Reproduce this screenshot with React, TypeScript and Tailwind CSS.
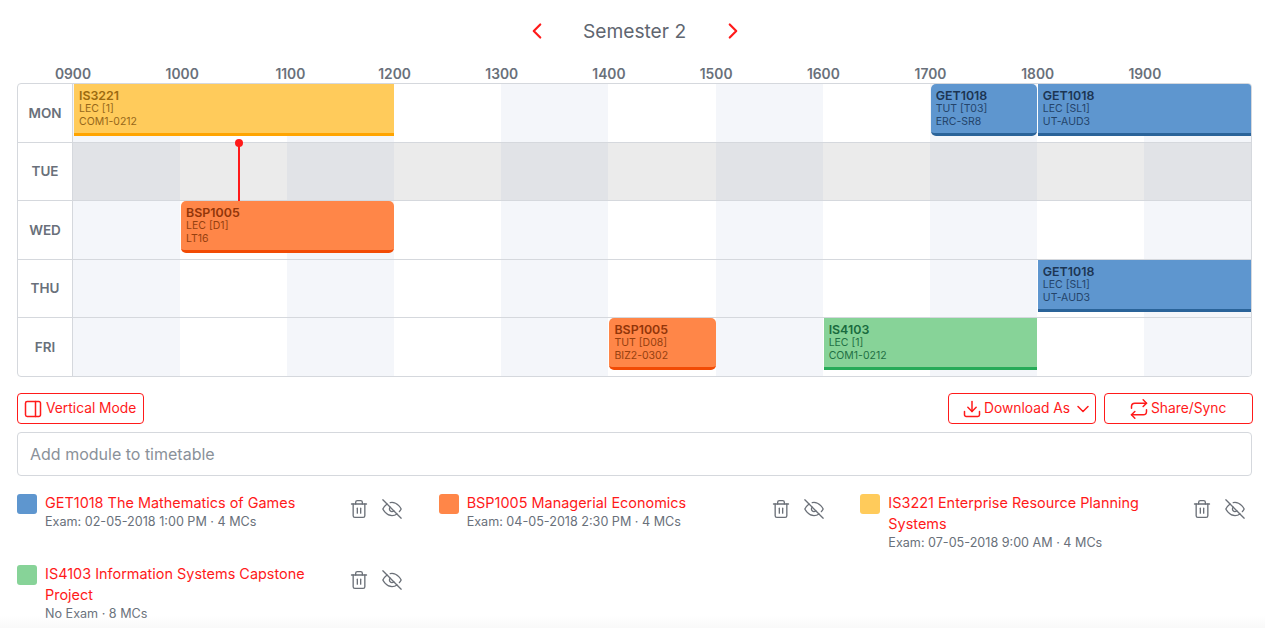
import type { ReactNode } from 'react'

type Colour = 'yellow' | 'orange' | 'blue' | 'green'

interface Lesson {
  code: string
  kind: string
  venue: string
  colour: Colour
  column: string
  rounded?: boolean
}

interface Day {
  name: string
  lessons: Lesson[]
  muted?: boolean
}

const HOURS = ['0900', '1000', '1100', '1200', '1300', '1400', '1500', '1600', '1700', '1800', '1900', '']

const COLOUR_CLASSES: Record<Colour, { box: string; title: string; body: string }> = {
  yellow: { box: 'bg-[#ffcb5b] border-[#ffa400]', title: 'text-[#9c6a10]', body: 'text-[#96671a]' },
  orange: { box: 'bg-[#ff8648] border-[#f24b05]', title: 'text-[#923509]', body: 'text-[#96400f]' },
  blue: { box: 'bg-[#5e96cf] border-[#2a6399]', title: 'text-[#1c3553]', body: 'text-[#24446a]' },
  green: { box: 'bg-[#87d398] border-[#26ab58]', title: 'text-[#196b3e]', body: 'text-[#1f7044]' },
}

const DAYS: Day[] = [
  {
    name: 'MON',
    lessons: [
      { code: 'IS3221', kind: 'LEC [1]', venue: 'COM1-0212', colour: 'yellow', column: 'col-start-1 col-end-4' },
      { code: 'GET1018', kind: 'TUT [T03]', venue: 'ERC-SR8', colour: 'blue', column: 'col-start-9 col-end-10', rounded: true },
      { code: 'GET1018', kind: 'LEC [SL1]', venue: 'UT-AUD3', colour: 'blue', column: 'col-start-10 col-end-12' },
    ],
  },
  { name: 'TUE', lessons: [], muted: true },
  {
    name: 'WED',
    lessons: [{ code: 'BSP1005', kind: 'LEC [D1]', venue: 'LT16', colour: 'orange', column: 'col-start-2 col-end-4', rounded: true }],
  },
  {
    name: 'THU',
    lessons: [{ code: 'GET1018', kind: 'LEC [SL1]', venue: 'UT-AUD3', colour: 'blue', column: 'col-start-10 col-end-12' }],
  },
  {
    name: 'FRI',
    lessons: [
      { code: 'BSP1005', kind: 'TUT [D08]', venue: 'BIZ2-0302', colour: 'orange', column: 'col-start-6 col-end-7', rounded: true },
      { code: 'IS4103', kind: 'LEC [1]', venue: 'COM1-0212', colour: 'green', column: 'col-start-8 col-end-10' },
    ],
  },
]

const MODULES = [
  { title: 'GET1018 The Mathematics of Games', meta: 'Exam: 02-05-2018 1:00 PM · 4 MCs', swatch: 'bg-[#5e96cf]' },
  { title: 'BSP1005 Managerial Economics', meta: 'Exam: 04-05-2018 2:30 PM · 4 MCs', swatch: 'bg-[#ff8648]' },
  { title: 'IS3221 Enterprise Resource Planning Systems', meta: 'Exam: 07-05-2018 9:00 AM · 4 MCs', swatch: 'bg-[#ffcb5b]' },
  { title: 'IS4103 Information Systems Capstone Project', meta: 'No Exam · 8 MCs', swatch: 'bg-[#87d398]' },
]

// feather-style outline, the stroke width differs per use
function Icon({ size, width = 1.8, className, children }: { size: number; width?: number; className?: string; children: ReactNode }) {
  return (
    <svg
      width={size}
      height={size}
      viewBox="0 0 24 24"
      fill="none"
      stroke="currentColor"
      strokeWidth={width}
      strokeLinecap="round"
      strokeLinejoin="round"
      className={className}
    >
      {children}
    </svg>
  )
}

function TrashIcon() {
  return (
    <Icon size={20} width={1.6}>
      <path d="M3 6h18" />
      <path d="M19 6v14a2 2 0 0 1-2 2H7a2 2 0 0 1-2-2V6m3 0V4a2 2 0 0 1 2-2h4a2 2 0 0 1 2 2v2" />
      <path d="M10 11v6" />
      <path d="M14 11v6" />
    </Icon>
  )
}

function EyeOffIcon() {
  return (
    <Icon size={20} width={1.6}>
      <path d="M17.94 17.94A10.07 10.07 0 0 1 12 20c-7 0-11-8-11-8a18.45 18.45 0 0 1 5.06-5.94M9.9 4.24A9.12 9.12 0 0 1 12 4c7 0 11 8 11 8a18.5 18.5 0 0 1-2.16 3.19m-6.72-1.07a3 3 0 1 1-4.24-4.24" />
      <path d="M1 1l22 22" />
    </Icon>
  )
}

function LessonCard({ lesson }: { lesson: Lesson }) {
  const colours = COLOUR_CLASSES[lesson.colour]
  return (
    <div
      className={`${lesson.column} row-start-1 z-10 ml-px h-[52px] border-b-[3px] px-[5px] pt-[5px] ${colours.box} ${lesson.rounded ? 'rounded-[5px]' : ''}`}
    >
      <p className={`text-[12.4px] font-semibold leading-[13px] ${colours.title}`}>{lesson.code}</p>
      <p className={`text-[10.5px] leading-[13px] ${colours.body}`}>{lesson.kind}</p>
      <p className={`text-[10.5px] leading-[13px] ${colours.body}`}>{lesson.venue}</p>
    </div>
  )
}

function DayRow({ day }: { day: Day }) {
  return (
    <div className="flex h-[58.5px] border-b border-[#d5d8dd] last:h-[58px] last:border-b-0">
      <div className="flex w-[55px] shrink-0 items-center justify-center border-r border-[#d5d8dd] text-[13.5px] font-semibold text-[#69707a]">
        {day.name}
      </div>
      <div className="relative grid flex-1 grid-cols-11">
        {HOURS.slice(0, 11).map((hour, i) => (
          <div
            key={hour}
            style={{ gridColumnStart: i + 1 }}
            className={`row-start-1 ${
              day.muted ? (i % 2 === 0 ? 'bg-[#e1e3e7]' : 'bg-[#ebebeb]') : i % 2 === 0 ? 'bg-[#f4f6fa]' : ''
            }`}
          />
        ))}
        {day.lessons.map((lesson) => (
          <LessonCard key={lesson.code + lesson.kind} lesson={lesson} />
        ))}
        {day.muted ? (
          <div className="absolute left-[165px] top-0 z-20 flex h-[58px] w-[2px] justify-center bg-[#ff1a1a]">
            <span className="absolute -top-[4px] h-[8px] w-[8px] shrink-0 rounded-full bg-[#ff1a1a]" />
          </div>
        ) : null}
      </div>
    </div>
  )
}

function OutlineButton({ className, children }: { className?: string; children: ReactNode }) {
  return (
    <button
      type="button"
      className={`flex h-[31px] items-center rounded-[4px] border border-[#ff1a1a] text-[13.8px] text-[#ff1a1a] ${className ?? ''}`}
    >
      {children}
    </button>
  )
}

export default function App() {
  return (
    <div className="relative h-[628px] overflow-hidden bg-white px-[17px] pr-[13px] font-['Inter','Noto_Sans',sans-serif]">
      <header className="flex h-[62px] items-center justify-center gap-[25px] text-[#ff1a1a]">
        <Icon size={26} width={2}>
          <path d="M15 18l-6-6 6-6" />
        </Icon>
        <h1 className="w-[120px] text-center text-[19.2px] font-normal text-[#5f6670]">Semester 2</h1>
        <Icon size={26} width={2}>
          <path d="M9 18l6-6-6-6" />
        </Icon>
      </header>

      <div className="ml-[56px] flex h-[21px] w-[1179px] items-center">
        {HOURS.slice(0, 11).map((hour) => (
          <div key={hour} className="flex-1">
            <span
              className={`inline-block -translate-x-1/2 text-[13.8px] font-semibold text-[#69707a] ${
                hour === '1000' ? 'ml-[2px]' : hour === '1100' ? 'ml-[3px]' : ''
              }`}
            >
              {hour}
            </span>
          </div>
        ))}
      </div>

      <section className="w-[1235px] overflow-hidden rounded-[4px] border border-[#d5d8dd]">
        {DAYS.map((day) => (
          <DayRow key={day.name} day={day} />
        ))}
      </section>

      <div className="mt-[16px] flex w-[1236px] justify-between">
        <OutlineButton className="w-[127px] gap-[3px] pl-[5px]">
          <Icon size={20} className="rotate-180">
            <rect x="3" y="3" width="18" height="18" rx="2" />
            <path d="M9 3v18" />
          </Icon>
          Vertical Mode
        </OutlineButton>
        <div className="flex gap-[8px]">
          <OutlineButton className="w-[148px] gap-[2px] pl-[13px]">
            <Icon size={20}>
              <path d="M21 15v4a2 2 0 0 1-2 2H5a2 2 0 0 1-2-2v-4" />
              <path d="M7 10l5 5 5-5" />
              <path d="M12 15V3" />
            </Icon>
            Download As
            <Icon size={20} className="ml-[1px]">
              <path d="M6 9l6 6 6-6" />
            </Icon>
          </OutlineButton>
          <OutlineButton className="w-[149px] gap-[2px] pl-[24px]">
            <Icon size={20}>
              <path d="M17 1l4 4-4 4" />
              <path d="M3 11V9a4 4 0 0 1 4-4h14" />
              <path d="M7 23l-4-4 4-4" />
              <path d="M21 13v2a4 4 0 0 1-4 4H3" />
            </Icon>
            Share/Sync
          </OutlineButton>
        </div>
      </div>

      <div className="mt-[8px] flex h-[44px] w-[1235px] items-center rounded-[4px] border border-[#d5d8dd] px-[12px] text-[16px] text-[#8a9199]">
        Add module to timetable
      </div>

      <ul className="mt-[18px] grid w-[1235px] grid-cols-3 gap-x-[30px] gap-y-[13px]">
        {MODULES.map((module) => (
          <li key={module.title} className="flex">
            <span className={`h-[20px] w-[20px] shrink-0 rounded-[3px] ${module.swatch}`} />
            <div className="ml-[8px] w-[296px] shrink-0">
              <p className="-mt-[2px] text-[14.45px] leading-[21px] text-[#ff1a1a]">{module.title}</p>
              <p className="text-[12.6px] leading-[18px] text-[#69707a]">{module.meta}</p>
            </div>
            <div className="ml-[8px] flex gap-[13px] pt-[5px] text-[#6b7078]">
              <TrashIcon />
              <EyeOffIcon />
            </div>
          </li>
        ))}
      </ul>

      <div className="absolute inset-x-0 bottom-0 h-[12px] bg-gradient-to-b from-transparent to-[#f9f9f9]" />
    </div>
  )
}
